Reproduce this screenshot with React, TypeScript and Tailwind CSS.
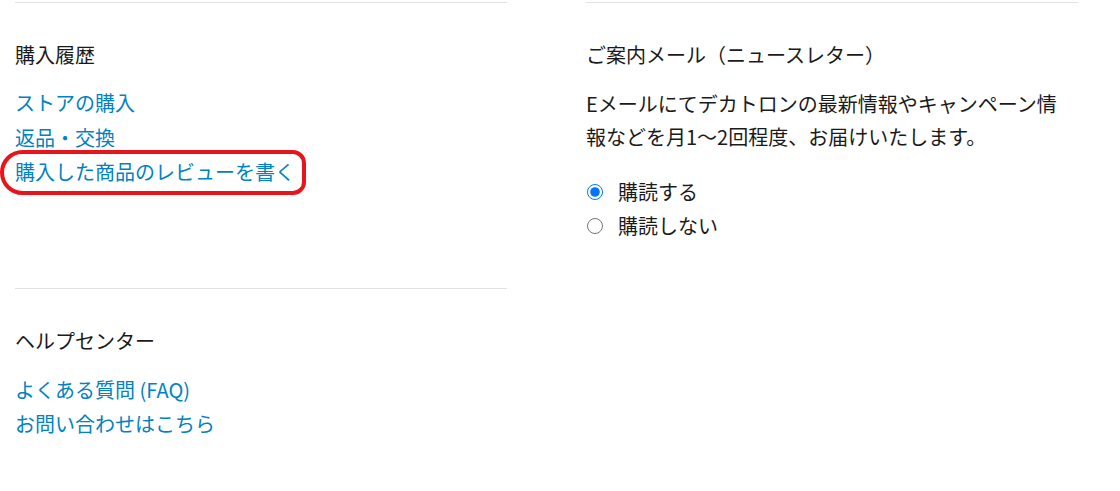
import React from 'react'

const font = { fontFamily: '"Noto Sans CJK JP", "Noto Sans", sans-serif' }

function Heading({ children }: { children: React.ReactNode }) {
  return <h2 className="text-[20px] leading-[30px] font-normal text-[#1a1a1a]">{children}</h2>
}

function LinkList({ items }: { items: string[] }) {
  return (
    <ul className="flex flex-col">
      {items.map((t) => (
        <li key={t} className="text-[20px] leading-[34.5px] text-[#0082c3]">
          <a href="#">{t}</a>
        </li>
      ))}
    </ul>
  )
}

export default function App() {
  return (
    <div className="w-[1120px] h-[491px] bg-white overflow-hidden" style={font}>
      <div className="grid grid-cols-[492px_492px] gap-x-[79px] pl-[15px] pt-[2px]">
        {/* left column */}
        <div className="flex flex-col">
          <section className="border-t border-[#e1e1e1] pt-[37px] pb-[98px]">
            <Heading>購入履歴</Heading>
            <div className="relative mt-[16px]">
              <LinkList items={['ストアの購入', '返品・交換', '購入した商品のレビューを書く']} />
              {/* annotation */}
              <div className="absolute left-[-15px] top-[64px] w-[306px] h-[45px] border-[4px] border-[#e8141c] rounded-l-[24px] rounded-r-[14px]" />
            </div>
          </section>
          <section className="border-t border-[#e1e1e1] pt-[37px]">
            <Heading>ヘルプセンター</Heading>
            <div className="mt-[17px]">
              <LinkList items={['よくある質問 (FAQ)', 'お問い合わせはこちら']} />
            </div>
          </section>
        </div>

        {/* right column */}
        <section className="border-t border-[#e1e1e1] pt-[37px]">
          <Heading>ご案内メール（ニュースレター）</Heading>
          <p className="mt-[17px] text-[20px] leading-[33px] text-[#1a1a1a]">
            Eメールにてデカトロンの最新情報やキャンペーン情
            <br />
            報などを月1～2回程度、お届けいたします。
          </p>
          <div className="mt-[22px] flex flex-col">
            <label className="flex items-center h-[34px] text-[20px] text-[#1a1a1a]">
              <input type="radio" name="nl" defaultChecked className="m-0 ml-[1px] w-[16px] h-[16px]" />
              <span className="ml-[15px]">購読する</span>
            </label>
            <label className="flex items-center h-[34px] text-[20px] text-[#1a1a1a]">
              <input type="radio" name="nl" className="m-0 ml-[1px] w-[16px] h-[16px]" />
              <span className="ml-[15px]">購読しない</span>
            </label>
          </div>
        </section>
      </div>
    </div>
  )
}
